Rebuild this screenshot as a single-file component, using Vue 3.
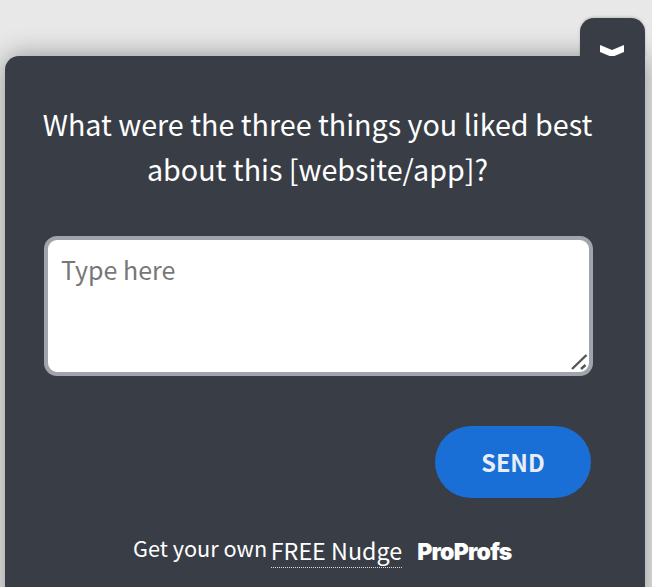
<script setup>
const question = 'What were the three things you liked best about this [website/app]?'
</script>

<template>
  <div class="page">
    <div class="widget">
      <button class="tab" aria-label="Collapse">
        <svg width="24" height="12" viewBox="0 0 24 12"><path d="M0 0 L12 5 L24 0 L24 7 L12 12 L0 7 Z" fill="#fff" /></svg>
      </button>
      <div class="panel">
        <p class="question">{{ question }}</p>
        <div class="field">
          <div class="input">Type here</div>
          <svg class="grip" width="20" height="20" viewBox="0 0 20 20">
            <path d="M3 17 L17.5 3 M12 17 L16.5 13" stroke="#555" stroke-width="2.4" fill="none" />
          </svg>
        </div>
        <div class="actions"><button class="send">SEND</button></div>
        <div class="footer">
          <span class="own">Get your own</span>
          <span class="free">FREE Nudge</span>
          <span class="brand">ProProfs</span>
        </div>
      </div>
    </div>
  </div>
</template>

<style>
html, body { margin: 0; background: #e8e8e8; overflow: hidden; }
</style>

<style scoped>
.page {
  width: 652px;
  height: 587px;
  overflow: hidden;
  padding: 56px 7px 0 5px;
  box-sizing: border-box;
  background: #e8e8e8;
  font-family: "Noto Sans CJK JP", "Noto Sans", sans-serif;
}
.widget { position: relative; }
.tab {
  position: absolute;
  z-index: 1;
  top: -38px;
  right: 0;
  width: 65px;
  height: 40px;
  border: 0;
  padding: 27px 1px 0 0;
  box-sizing: border-box;
  display: flex;
  justify-content: center;
  align-items: flex-start;
  border-radius: 14px 14px 0 0;
  background: #393d46;
  box-shadow: 0 -1px 3px rgba(0, 0, 0, .18);
  clip-path: inset(-6px -6px 2px -6px);
}
.tab svg { flex: none; overflow: visible; }
.panel {
  position: relative;
  height: 560px;
  border-radius: 14px 0 0 0;
  background: #393d46;
  box-shadow: 0 0 26px rgba(0, 0, 0, .38);
  padding: 46px 52px 0 39px;
  box-sizing: border-box;
}
.question {
  margin: -1px -9px 0 -11px;
  color: #fff;
  font-size: 28.7px;
  line-height: 45px;
  text-align: center;
}
.field {
  position: relative;
  margin-top: 45px;
  height: 140px;
  box-sizing: border-box;
  border: 4px solid #a0a4ac;
  border-radius: 13px;
  background: #fff;
}
.input {
  padding: 11px 13px;
  color: #777;
  font-size: 25px;
  line-height: 36px;
}
.grip { position: absolute; right: 0; bottom: 0; }
.actions {
  display: flex;
  justify-content: flex-end;
  margin-top: 50px;
  padding-right: 2px;
}
.send {
  width: 156px;
  height: 72px;
  border: 0;
  border-radius: 36px;
  background: #1a6fd6;
  color: #e8eef7;
  font: 700 23.5px "Noto Sans CJK JP", "Noto Sans", sans-serif;
}
.footer {
  display: flex;
  align-items: flex-end;
  margin-top: 35px;
  padding-left: 89px;
  color: #fff;
}
.own { font-size: 21.7px; line-height: 30px; margin-bottom: 5px; }
.free {
  margin-left: 3.5px;
  font-size: 23.3px;
  line-height: 33px;
  border-bottom: 1px dotted #ddd;
}
.brand {
  margin-left: 15px;
  font: 900 23px/30px Inter, sans-serif;
  letter-spacing: -0.75px;
  margin-bottom: 1px;
}
</style>
